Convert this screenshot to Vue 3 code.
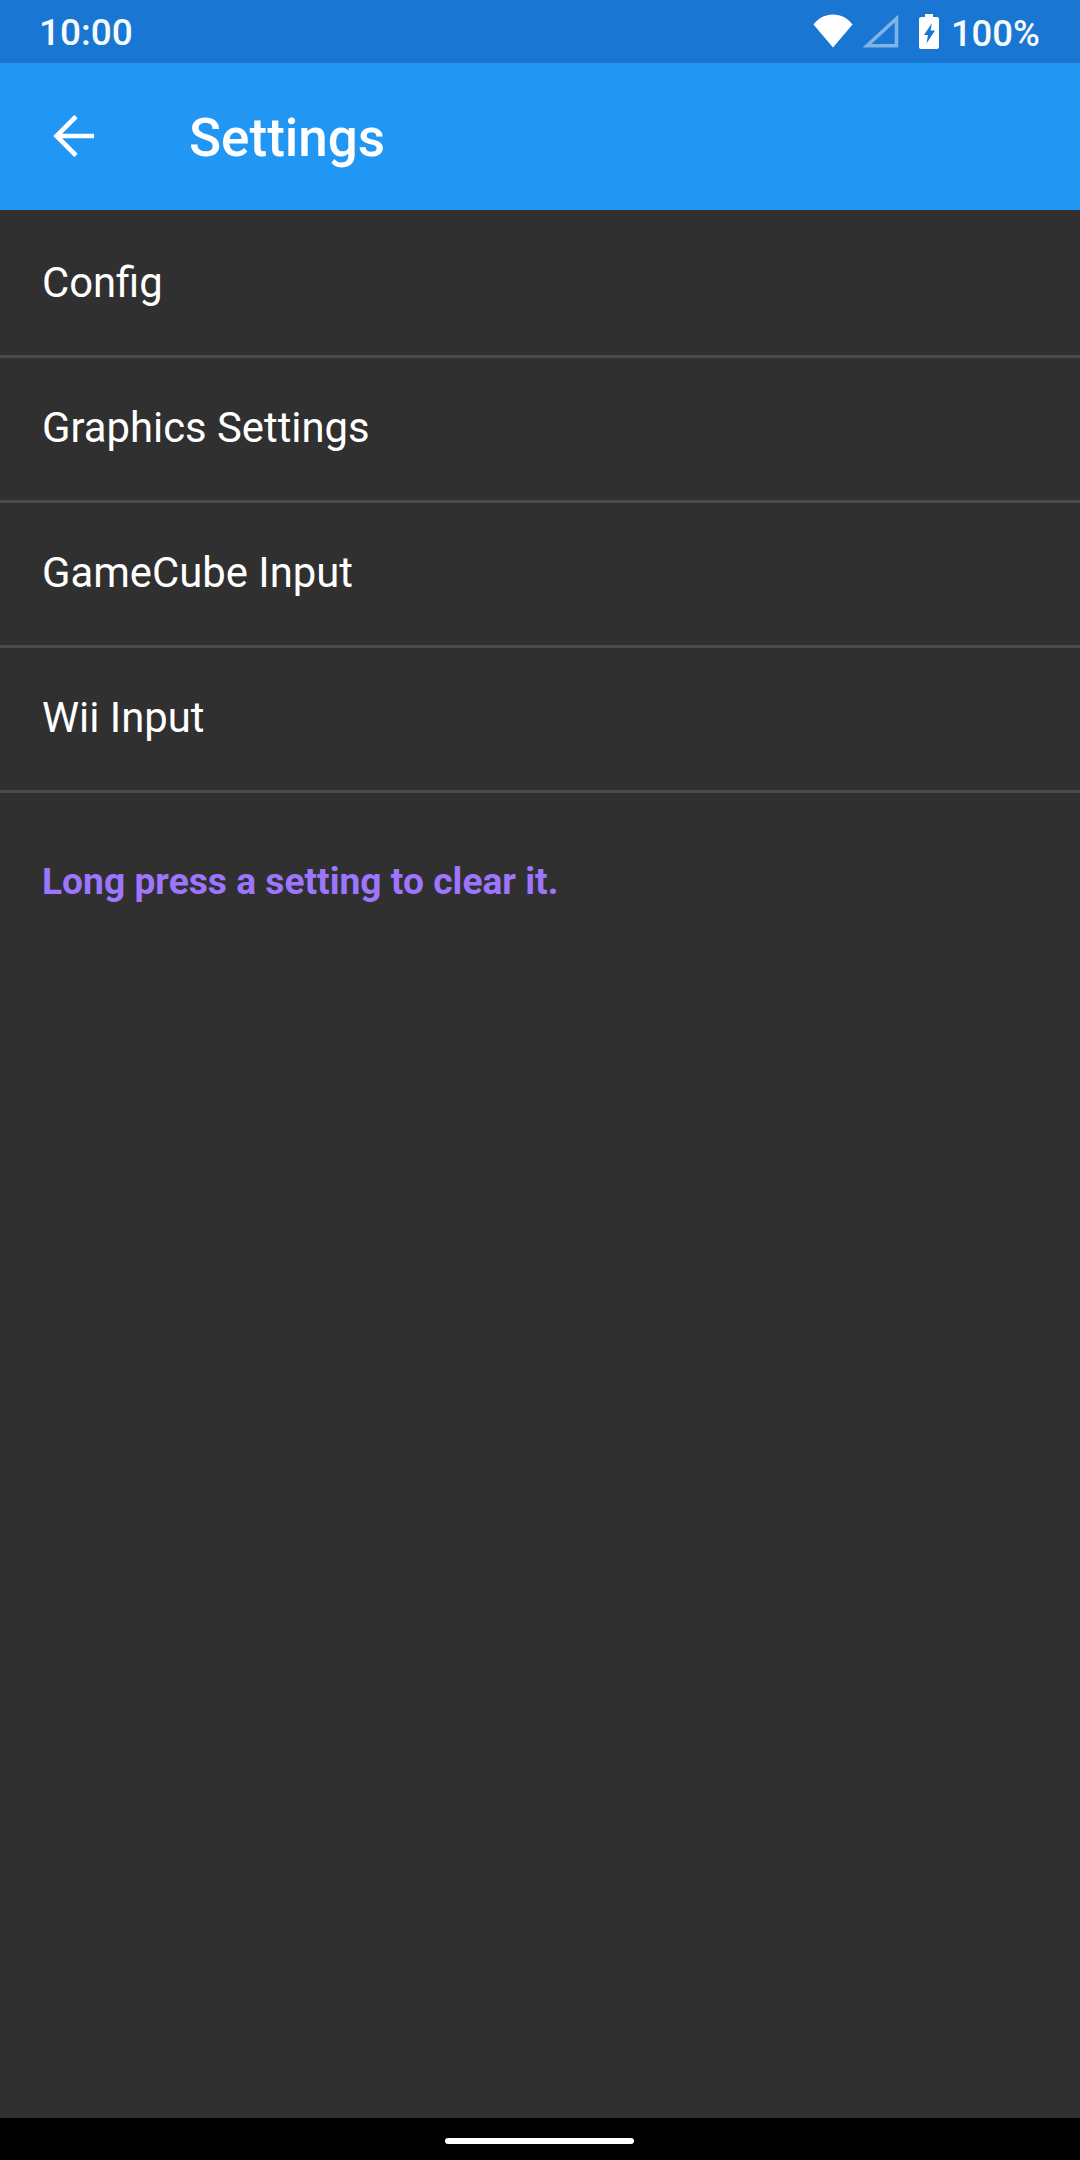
<script setup>
const rows = ['Config', 'Graphics Settings', 'GameCube Input', 'Wii Input']
</script>

<template>
  <div class="screen">
    <div class="status">
      <span class="time">10:00</span>
      <div class="status-right">
        <svg class="wifi" width="40" height="34" viewBox="0 0 40 34">
          <path d="M0.5 10.5C5.5 4 12 0.5 20 0.5S34.5 4 39.5 10.5L20 33.5Z" fill="#fff" />
        </svg>
        <svg class="signal" width="36" height="34" viewBox="0 0 36 34">
          <path d="M33.5 4.5V31.8H4Z" fill="none" stroke="#fff" stroke-opacity="0.45" stroke-width="3.6" />
        </svg>
        <svg class="battery" width="20" height="35" viewBox="0 0 20 35">
          <path d="M6 0H14V3H18Q20 3 20 5V33Q20 35 18 35H2Q0 35 0 33V5Q0 3 2 3H6Z" fill="#fff" />
          <path d="M13 9L5 21H9L7.5 29.5L16 16.5H11.5Z" fill="#1976d2" />
        </svg>
        <span class="pct">100%</span>
      </div>
    </div>
    <div class="appbar">
      <svg class="back" width="44" height="42" viewBox="0 0 44 42">
        <path d="M42 21H4M24 1.5L4.5 21L24 40.5" fill="none" stroke="#fff" stroke-width="4.6" />
      </svg>
      <span class="title">Settings</span>
    </div>
    <div class="content">
      <div class="list">
        <div v-for="row in rows" :key="row" class="row">{{ row }}</div>
      </div>
      <div class="hint">Long press a setting to clear it.</div>
    </div>
    <div class="nav"><div class="pill"></div></div>
  </div>
</template>

<style scoped>
.screen {
  width: 1080px;
  height: 2160px;
  display: flex;
  flex-direction: column;
  background: #303030;
  font-family: Roboto, "Liberation Sans", sans-serif;
  color: #fff;
  overflow: hidden;
}
.status {
  height: 63px;
  background: #1976d2;
  display: flex;
  align-items: center;
  justify-content: space-between;
  padding: 0 40px;
  box-sizing: border-box;
  flex: none;
}
.time, .pct {
  font-weight: 500;
  line-height: 63px;
  opacity: 0.97;
}
.time { margin-top: 2px; margin-left: -1px; font-size: 37px; }
.pct { margin-top: 4px; margin-left: -1px; font-size: 36.5px; }
.status-right {
  display: flex;
  align-items: center;
  height: 63px;
}
.wifi { margin-right: 10px; margin-top: -2px; }
.signal { margin-right: 20px; margin-top: -2px; }
.battery { margin-right: 13px; margin-top: -1px; }
.appbar {
  height: 147px;
  background: #2196f3;
  display: flex;
  align-items: center;
  flex: none;
}
.back { margin-left: 52px; margin-top: -1px; }
.title {
  margin-left: 93px;
  margin-top: 2px;
  font-size: 53px;
  font-weight: 500;
}
.content { flex: 1; padding-top: 3px; }
.row {
  height: 138px;
  padding-bottom: 4px;
  padding-left: 42px;
  border-bottom: 3px solid #4a4a4a;
  display: flex;
  align-items: center;
  font-size: 41.8px;
}
.hint {
  margin-top: 66px;
  padding-left: 42px;
  font-size: 37.2px;
  font-weight: 700;
  line-height: 44px;
  color: #9e75ff;
}
.nav {
  height: 42px;
  background: #000;
  flex: none;
  display: flex;
  justify-content: center;
  padding-top: 20px;
  box-sizing: border-box;
}
.pill {
  width: 189px;
  height: 6px;
  border-radius: 3px;
  background: #fff;
  margin-left: -1px;
}
</style>
